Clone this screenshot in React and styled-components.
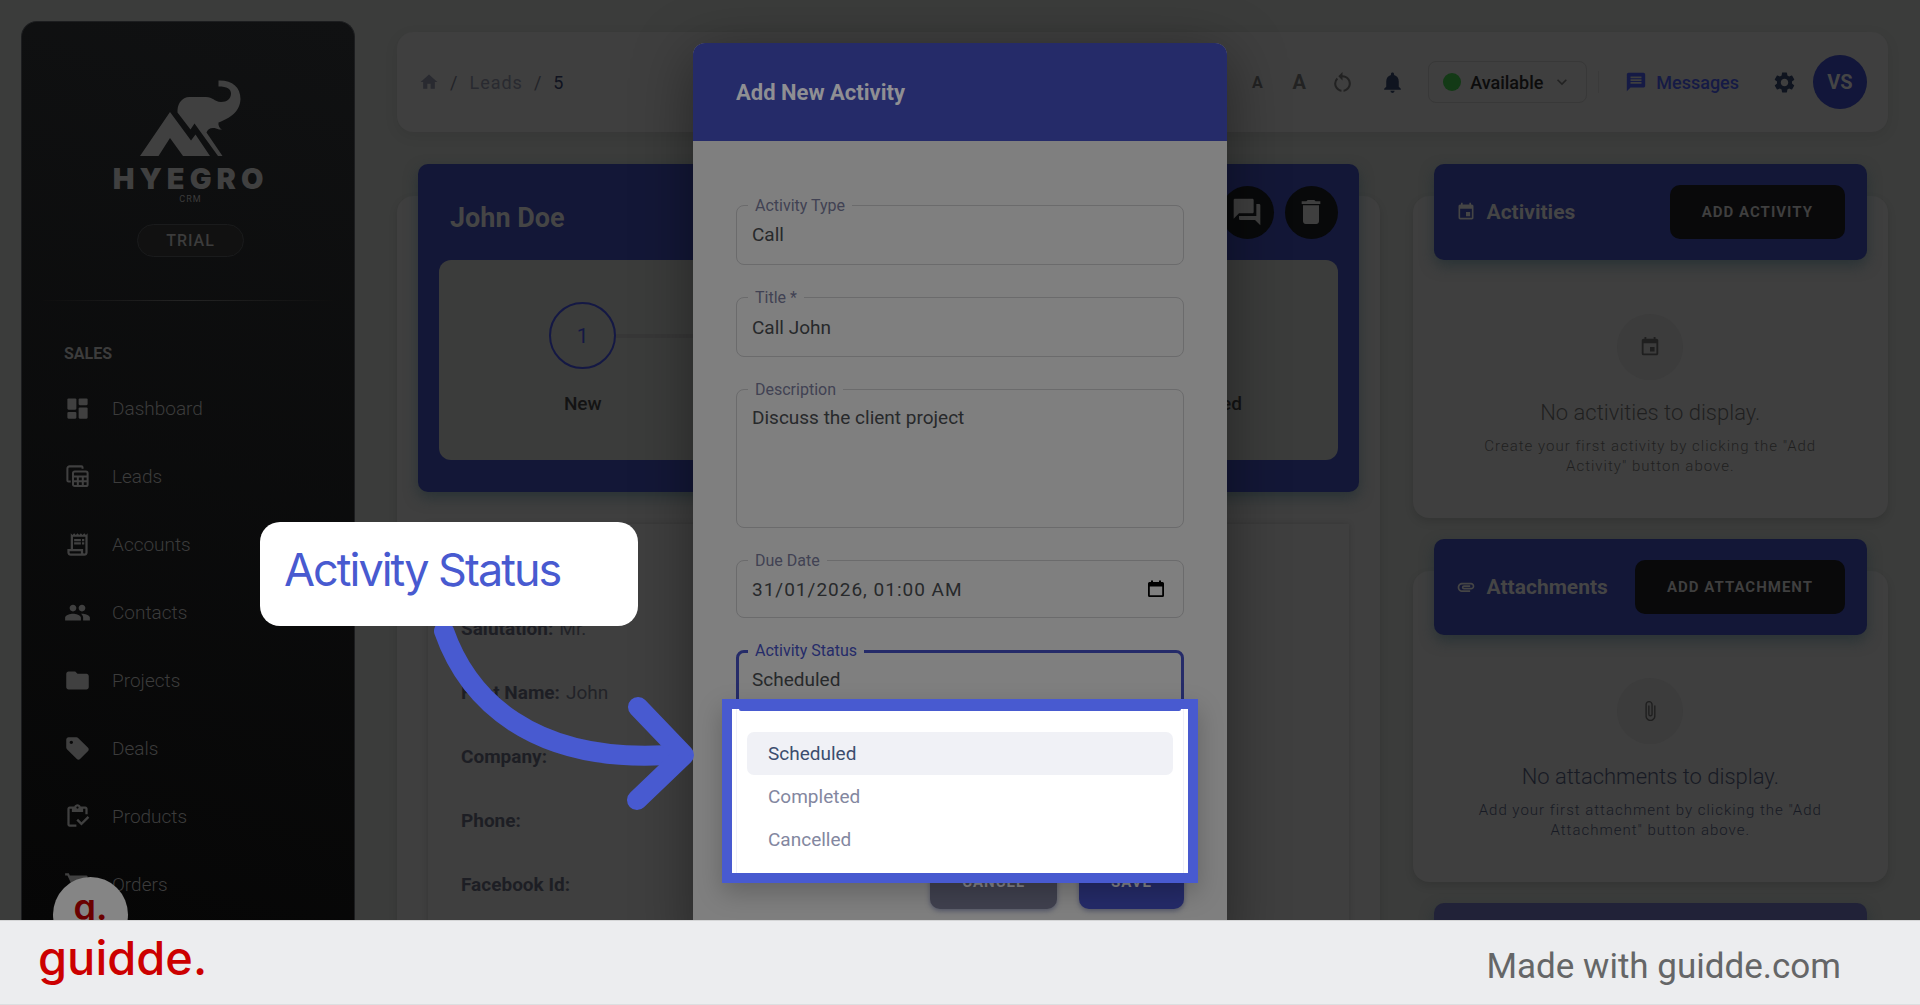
import styled, { createGlobalStyle } from "styled-components";
import {
  MdAttachFile,
  MdAttachment,
  MdDelete,
  MdEvent,
  MdFolder,
  MdHome,
  MdKeyboardArrowDown,
  MdMessage,
  MdNotifications,
  MdOutlineInventory,
  MdOutlineReceiptLong,
  MdPeople,
  MdQuestionAnswer,
  MdRestartAlt,
  MdSell,
  MdSettings,
  MdShoppingCart,
} from "react-icons/md";

const GlobalStyle = createGlobalStyle`
  * {
    box-sizing: border-box;
  }

  body {
    margin: 0;
    font-family: Roboto, "Liberation Sans", sans-serif;
    background: #3b3c3b;
  }

  button, input, select, textarea {
    font-family: inherit;
  }

  button {
    border: none;
    padding: 0;
    cursor: pointer;
  }

  a {
    color: inherit;
    text-decoration: none;
  }
`;

const Page = styled.div`
  height: 100vh;
  display: flex;
  flex-direction: column;
`;

const Stage = styled.div`
  flex: 1;
  min-height: 0;
  display: flex;
  position: relative;
  overflow: hidden;
`;

/* Sidebar */

const Sidebar = styled.aside`
  flex: none;
  width: 334px;
  margin: 21px 0 0 21px;
  padding-top: 58px;
  border-radius: 16px 16px 0 0;
  border: 1px solid #1c1d1f;
  border-bottom: none;
  background: linear-gradient(195deg, #101112, #060606);
  color: #3c3c3c;
`;

const Brand = styled.div`
  display: flex;
  flex-direction: column;
  align-items: center;
  padding-left: 5px;
`;

const BrandMark = styled.svg`
  width: 102px;
  height: 77px;
  fill: #404040;
`;

const BrandName = styled.div`
  margin-top: 8px;
  font-family: Inter, sans-serif;
  font-weight: 900;
  font-size: 29px;
  line-height: 28px;
  letter-spacing: 5px;
  color: #404040;
`;

const BrandSub = styled.div`
  font-size: 9px;
  line-height: 12px;
  letter-spacing: 1px;
`;

const Plan = styled.div`
  margin-top: 19px;
  width: 107px;
  border: 1px solid #1a1b1c;
  border-radius: 17px;
  background: #111111;
  text-align: center;
  font-size: 16px;
  font-weight: 500;
  line-height: 31px;
  letter-spacing: 1px;
`;

const Divider = styled.hr`
  width: 290px;
  height: 1px;
  margin: 43px auto 0;
  border: none;
  background: linear-gradient(to right, #0e0e0e, #242424, #0e0e0e);
`;

const SectionTitle = styled.h6`
  margin: 40px 0 0 42px;
  font-size: 16px;
  line-height: 26px;
  font-weight: 700;
`;

const Menu = styled.nav`
  margin-top: 7px;
`;

const MenuLink = styled.a`
  display: flex;
  align-items: center;
  gap: 21px;
  height: 68px;
  padding-left: 42px;
  font-size: 19px;
  font-weight: 300;

  svg {
    width: 27px;
    height: 27px;
    color: #404040;
  }
`;

const Launcher = styled.button`
  position: absolute;
  left: 53px;
  top: 877px;
  width: 75px;
  height: 75px;
  padding-bottom: 16px;
  border-radius: 50%;
  background: #858585;
  color: #6a0000;
  font-family: Inter, sans-serif;
  font-weight: 600;
  font-size: 36px;
  line-height: 36px;
`;

/* Page content */

const Main = styled.main`
  flex: 1;
  min-width: 0;
  padding: 32px 32px 0 42px;
`;

const TopBar = styled.header`
  height: 100px;
  padding: 0 21px 0 22px;
  border-radius: 16px;
  background: #3f3f3f;
  box-shadow: 0 4px 14px rgba(0, 0, 0, 0.08);
  display: flex;
  align-items: center;
  justify-content: space-between;
`;

const Breadcrumbs = styled.nav`
  display: flex;
  align-items: center;
  gap: 11px;
  font-size: 18px;
  letter-spacing: 1px;
  color: #222328;

  svg {
    width: 20px;
    height: 20px;
  }
`;

const Crumb = styled.a`
  display: flex;
  color: ${(props) => (props.$current ? "#10131f" : "#292a30")};
`;

const Tools = styled.div`
  display: flex;
  align-items: center;
`;

const ToolButton = styled.button`
  width: ${(props) => props.$width || 46}px;
  height: 42px;
  background: none;
  color: ${(props) => (props.$dark ? "#0f141f" : "#222222")};
  font-size: ${(props) => props.$size || 16}px;
  font-weight: 700;
  display: flex;
  align-items: center;
  justify-content: center;

  svg {
    width: 25px;
    height: 25px;
  }
`;

const StatusButton = styled.button`
  width: 159px;
  height: 42px;
  margin: 0 11px 0 8px;
  padding: 0 14px;
  border: 1px solid #383838;
  border-radius: 8px;
  background: none;
  color: #0c0c0c;
  font-size: 18px;
  font-weight: 500;
  display: flex;
  align-items: center;
  gap: 9px;

  svg {
    width: 20px;
    height: 20px;
    color: #222222;
    margin-left: auto;
  }
`;

const StatusDot = styled.span`
  width: 18px;
  height: 18px;
  border-radius: 50%;
  background: #133a16;
`;

const MessagesLink = styled.a`
  display: flex;
  align-items: center;
  gap: 9px;
  margin-right: 23px;
  padding-left: 26px;
  border-left: 1px solid #3a3a3a;
  color: #151a45;
  font-size: 18px;
  font-weight: 500;

  svg {
    width: 22px;
    height: 22px;
  }
`;

const Avatar = styled.button`
  width: 54px;
  height: 54px;
  margin-left: 7px;
  border-radius: 50%;
  background: #12163a;
  color: #454545;
  font-size: 20px;
  font-weight: 700;
`;

const Columns = styled.div`
  display: grid;
  grid-template-columns: 31fr 15fr;
  gap: 33px;
  align-items: start;
  margin-top: 64px;
`;

const SideColumn = styled.div`
  display: grid;
  gap: 53px;
`;

const Card = styled.section`
  padding: 0 21px;
  border-radius: 16px;
  background: #3f3f3f;
  box-shadow: 0 4px 8px rgba(0, 0, 0, 0.12);
`;

const LeadHeader = styled.div`
  position: relative;
  margin-top: -32px;
  height: 328px;
  padding: 21px;
  border-radius: 10px;
  background: #131737;
  box-shadow: 0 6px 14px rgba(28, 44, 48, 0.6);
`;

const LeadTop = styled.div`
  display: flex;
  align-items: center;
  justify-content: space-between;
`;

const LeadName = styled.h4`
  margin: 0 0 0 11px;
  padding-top: 12px;
  font-size: 27px;
  line-height: 42px;
  color: #454545;
`;

const LeadActions = styled.div`
  display: flex;
  gap: 11px;
`;

const RoundButton = styled.button`
  width: 53px;
  height: 53px;
  border-radius: 50%;
  background: #08090a;
  color: #3f3f3f;
  display: flex;
  align-items: center;
  justify-content: center;

  svg {
    width: 32px;
    height: 32px;
  }
`;

const Stepper = styled.ol`
  list-style: none;
  margin: 21px 0 0;
  padding: 42px 0 0;
  height: 200px;
  border-radius: 12px;
  background: #3b3c3b;
  display: flex;
  justify-content: space-between;
`;

const Step = styled.li`
  flex: 0 0 32%;
  display: flex;
  flex-direction: column;
  align-items: center;
  font-size: 19px;
  font-weight: 500;
  color: #131313;
`;

const StepTrack = styled.div`
  width: 100%;
  margin-bottom: 23px;
  display: flex;
  align-items: center;

  &::before,
  &::after {
    content: "";
    flex: 1;
    height: 4px;
    background: #373737;
  }

  ${Step}:first-child &::before,
  ${Step}:last-child &::after {
    background: none;
  }
`;

const StepCircle = styled.div`
  width: 67px;
  height: 67px;
  border: 2px solid #141844;
  border-radius: 50%;
  color: #141844;
  font-size: 21px;
  font-weight: 400;
  display: flex;
  align-items: center;
  justify-content: center;
`;

const Details = styled.dl`
  margin: 32px 10px 0;
  padding: 72px 33px 80px;
  background: #3f3f3f;
  box-shadow: 0 0 6px rgba(0, 0, 0, 0.16);
`;

const Detail = styled.div`
  display: flex;
  gap: 6px;
  height: 64px;
  align-items: center;
  font-size: 19px;
  color: #222328;

  dt {
    font-weight: 700;
    color: #1d1e24;
  }

  dd {
    margin: 0;
  }
`;

const CardHeader = styled.div`
  position: relative;
  margin-top: -32px;
  height: 96px;
  padding: 0 22px;
  border-radius: 10px;
  background: ${(props) => (props.$pale ? "#212238" : "#131737")};
  box-shadow: 0 6px 14px rgba(28, 44, 48, 0.6);
  color: #454545;
  display: flex;
  align-items: center;
  gap: 11px;

  svg {
    width: 20px;
    height: 20px;
  }
`;

const CardTitle = styled.h5`
  margin: 0;
  flex: 1;
  font-size: 21px;
  font-weight: 700;
`;

const AddButton = styled.button`
  height: 54px;
  padding: 0 32px;
  border-radius: 10px;
  background: #09090a;
  color: #3f3f3f;
  font-size: 15px;
  font-weight: 700;
  letter-spacing: 1px;
  white-space: nowrap;
`;

const Empty = styled.div`
  display: flex;
  flex-direction: column;
  align-items: center;
  padding: ${(props) => (props.$cool ? 43 : 54)}px 32px 42px;
  text-align: center;
  color: ${(props) => (props.$cool ? "#171a24" : "#1f1f1f")};
`;

const EmptyIcon = styled.div`
  width: 66px;
  height: 66px;
  border-radius: 50%;
  background: #3c3c3c;
  color: #1f1f1f;
  display: flex;
  align-items: center;
  justify-content: center;

  svg {
    width: 22px;
    height: 22px;
  }
`;

const EmptyTitle = styled.p`
  margin: 18px 0 8px;
  font-size: 22px;
  line-height: 30px;
  font-weight: 300;
`;

const EmptyText = styled.p`
  margin: 0;
  font-size: 15px;
  line-height: 20px;
  font-weight: 300;
  letter-spacing: 1px;
`;

/* Dialog */

const Overlay = styled.div`
  position: absolute;
  inset: 0;
  padding-top: 43px;
  display: flex;
  justify-content: center;
  align-items: flex-start;
`;

const Dialog = styled.form`
  width: 534px;
  border-radius: 12px;
  background: #7f7f7f;
  box-shadow: 0 12px 60px rgba(0, 0, 0, 0.4);
`;

const DialogHeader = styled.div`
  height: 98px;
  padding: 0 43px;
  border-radius: 12px 12px 0 0;
  background: #252b69;
  display: flex;
  align-items: center;
`;

const DialogTitle = styled.h2`
  margin: 0;
  font-size: 22px;
  font-weight: 700;
  color: #8f8f93;
`;

const DialogBody = styled.div`
  padding: 64px 43px 43px;
  display: grid;
  gap: 32px;
`;

const Field = styled.div`
  position: relative;
  height: ${(props) => props.$height || 60}px;
  border: ${(props) => (props.$focused ? "3px solid #252b69" : "1px solid #6b6b6c")};
  border-radius: 8px;

  & > label {
    position: absolute;
    top: ${(props) => (props.$focused ? -12 : -10)}px;
    left: ${(props) => (props.$focused ? 9 : 11)}px;
    padding: 0 7px;
    background: #7f7f7f;
    color: ${(props) => (props.$focused ? "#252b69" : "#414253")};
    font-size: 16px;
    line-height: 20px;
  }

  & > input,
  & > select,
  & > textarea {
    appearance: none;
    display: block;
    width: 100%;
    height: 100%;
    padding: 0 ${(props) => (props.$focused ? 13 : 15)}px;
    border: none;
    outline: none;
    resize: none;
    background: none;
    color: #27292b;
    font-size: 19px;
    line-height: 22px;
  }

  & > textarea {
    padding-top: 17px;
  }
`;

const DateInput = styled.input`
  letter-spacing: 1px;
`;

const PickerButton = styled.button`
  position: absolute;
  right: 18px;
  top: 18px;
  width: 18px;
  height: 20px;
  background: none;
  color: #000000;
`;

const Dropdown = styled.div`
  position: absolute;
  z-index: 1;
  top: 46px;
  left: -17px;
  right: -17px;
  border: 10px solid #485ad0;
  background: #ffffff;
  box-shadow: 0 10px 24px rgba(0, 0, 0, 0.22);
`;

const Options = styled.ul`
  list-style: none;
  margin: 0 4px;
  padding: 0 10px 12px;
  border: solid #eff0f8;
  border-width: 0 1px;
  background: #ffffff;

  &::before {
    content: "";
    display: block;
    height: 2px;
    margin: 0 -8px 21px;
    border-radius: 0 0 4px 4px;
    background: #485ad0;
  }
`;

const Option = styled.li`
  height: 43px;
  padding: 0 21px;
  border-radius: 7px;
  background: ${(props) => (props.$selected ? "#f0f1f6" : "transparent")};
  color: ${(props) => (props.$selected ? "#3c4d6e" : "#8387a0")};
  font-size: 19px;
  line-height: 43px;
`;

const Actions = styled.div`
  display: flex;
  justify-content: flex-end;
  gap: 22px;
  margin-top: 113px;
`;

const ActionButton = styled.button`
  height: 54px;
  padding: 0 32px;
  border-radius: 10px;
  background: ${(props) => (props.$primary ? "#252b69" : "#40414f")};
  color: #85858a;
  box-shadow: 0 2px 5px rgba(37, 43, 80, 0.5);
  font-size: 15px;
  font-weight: 700;
  letter-spacing: 1px;
`;

/* Walkthrough layer */

const Callout = styled.div`
  position: absolute;
  left: 260px;
  top: 522px;
  width: 378px;
  height: 104px;
  padding: 0 24px;
  border-radius: 20px;
  background: #ffffff;
  color: #485ad0;
  font-family: Inter, "Liberation Sans", sans-serif;
  font-size: 45px;
  line-height: 96px;
  font-weight: 400;
  letter-spacing: -2px;
  white-space: nowrap;
`;

const Arrow = styled.svg`
  position: absolute;
  left: 430px;
  top: 610px;
  width: 270px;
  height: 210px;
  fill: none;
  stroke: #485ad0;
  stroke-width: 20;
  stroke-linecap: round;
  stroke-linejoin: round;
`;

const Footer = styled.footer`
  flex: none;
  height: 85px;
  padding: 0 79px 0 38px;
  background: #ecedef;
  border-top: 1px solid #d5d6d7;
  border-bottom: 1px solid #dcdee0;
  display: flex;
  align-items: center;
  justify-content: space-between;
`;

const Wordmark = styled.a`
  padding-bottom: 10px;
  font-family: Inter, sans-serif;
  font-size: 47px;
  line-height: 60px;
  font-weight: 500;
  color: #cc0000;
`;

const MadeWith = styled.div`
  padding-top: 8px;
  font-size: 35px;
  line-height: 40px;
  color: #656667;
`;

const DashboardIcon = () => (
  <svg viewBox="0 0 24 24" fill="currentColor">
    <rect x="3" y="3" width="8" height="10" rx="1" />
    <rect x="3" y="15" width="8" height="6" rx="1" />
    <rect x="13" y="3" width="8" height="6" rx="1" />
    <rect x="13" y="11" width="8" height="10" rx="1" />
  </svg>
);

const LeadsIcon = () => (
  <svg viewBox="0 0 24 24" fill="none" stroke="currentColor" strokeWidth="1.8">
    <path d="M16.500 5V4a1 1 0 0 0-1-1H5a2 2 0 0 0-2 2v10.500a1 1 0 0 0 1 1h2" />
    <rect x="8" y="7.500" width="13" height="13" rx="1.500" />
    <path d="M8 12h13M8 16.300h13M12.300 12v9M16.700 12v9" />
  </svg>
);

const CalendarIcon = () => (
  <svg viewBox="0 0 18 20" width="18" height="20" fill="currentColor">
    <path d="M2.500 3H4V1.500h2V3h6V1.500h2V3h1.500A1.500 1.500 0 0 1 17 4.500v12a1.500 1.500 0 0 1-1.500 1.500h-13A1.500 1.500 0 0 1 1 16.500v-12A1.500 1.500 0 0 1 2.500 3zm.300 4.500v8.700h12.400V7.500z" />
  </svg>
);

const menu = [
  { label: "Dashboard", icon: <DashboardIcon /> },
  { label: "Leads", icon: <LeadsIcon /> },
  { label: "Accounts", icon: <MdOutlineReceiptLong /> },
  { label: "Contacts", icon: <MdPeople /> },
  { label: "Projects", icon: <MdFolder /> },
  { label: "Deals", icon: <MdSell /> },
  { label: "Products", icon: <MdOutlineInventory /> },
  { label: "Orders", icon: <MdShoppingCart /> },
];

const details = [
  ["Salutation:", "Mr."],
  ["First Name:", "John"],
  ["Company:", ""],
  ["Phone:", ""],
  ["Facebook Id:", ""],
];

const SideNav = () => (
  <Sidebar>
    <Brand>
      <BrandMark viewBox="0 0 102 77">
        <path d="M0 76 30 32 51 60.500 55.500 54.500 70 76H43L30 58 18.500 76z" />
        <path d="M37.500 30C38 22 43 17.500 49 17H66C73 17 74 21.500 81 22 87 22 91 18.500 91 13.500 91 9 87 6.500 78.500 6.500V.500C92 0 100.500 7 100.500 19 100 32 90 38 78.500 42.500 78 45.500 79.500 48.500 82 49.500 79 50 77 48.500 74.500 48 70 47.500 67.500 49.500 66.500 52.500L82.500 76H78L54.500 43.500 50.500 49.500 37.500 32.500z" />
      </BrandMark>
      <BrandName>HYEGRO</BrandName>
      <BrandSub>CRM</BrandSub>
      <Plan>TRIAL</Plan>
    </Brand>
    <Divider />
    <SectionTitle>SALES</SectionTitle>
    <Menu>
      {menu.map(({ label, icon }) => (
        <MenuLink key={label} href="#">
          {icon}
          {label}
        </MenuLink>
      ))}
    </Menu>
  </Sidebar>
);

const SideCard = ({ title, icon, button, emptyIcon, emptyTitle, emptyText, cool }) => (
  <Card>
    <CardHeader>
      {icon}
      <CardTitle>{title}</CardTitle>
      <AddButton type="button">{button}</AddButton>
    </CardHeader>
    <Empty $cool={cool}>
      <EmptyIcon>{emptyIcon}</EmptyIcon>
      <EmptyTitle>{emptyTitle}</EmptyTitle>
      <EmptyText>{emptyText}</EmptyText>
    </Empty>
  </Card>
);

const ActivityDialog = () => (
  <Overlay>
    <Dialog role="dialog" aria-labelledby="dialog-title">
      <DialogHeader>
        <DialogTitle id="dialog-title">Add New Activity</DialogTitle>
      </DialogHeader>
      <DialogBody>
        <Field>
          <label htmlFor="type">Activity Type</label>
          <select id="type" defaultValue="Call">
            <option>Call</option>
          </select>
        </Field>
        <Field>
          <label htmlFor="title">Title *</label>
          <input id="title" defaultValue="Call John" />
        </Field>
        <Field $height={139}>
          <label htmlFor="description">Description</label>
          <textarea id="description" defaultValue="Discuss the client project" />
        </Field>
        <Field $height={58}>
          <label htmlFor="due">Due Date</label>
          <DateInput id="due" defaultValue="31/01/2026, 01:00 AM" />
          <PickerButton type="button" aria-label="Open calendar">
            <CalendarIcon />
          </PickerButton>
        </Field>
        <Field $focused>
          <label htmlFor="status">Activity Status</label>
          <select id="status" defaultValue="Scheduled">
            <option>Scheduled</option>
            <option>Completed</option>
            <option>Cancelled</option>
          </select>
          <Dropdown>
            <Options role="listbox">
              <Option role="option" aria-selected="true" $selected>
                Scheduled
              </Option>
              <Option role="option">Completed</Option>
              <Option role="option">Cancelled</Option>
            </Options>
          </Dropdown>
        </Field>
        <Actions>
          <ActionButton type="button">CANCEL</ActionButton>
          <ActionButton type="button" $primary>
            SAVE
          </ActionButton>
        </Actions>
      </DialogBody>
    </Dialog>
  </Overlay>
);

const App = () => {
  return (
    <Page>
      <GlobalStyle />
      <Stage>
        <SideNav />
        <Main>
          <TopBar>
            <Breadcrumbs>
              <Crumb href="#" aria-label="Home">
                <MdHome />
              </Crumb>
              <span>/</span>
              <Crumb href="#">Leads</Crumb>
              <span>/</span>
              <Crumb href="#" $current>
                5
              </Crumb>
            </Breadcrumbs>
            <Tools>
              <ToolButton $width={42}>A</ToolButton>
              <ToolButton $width={42} $size={20}>
                A
              </ToolButton>
              <ToolButton $width={44} aria-label="Reset">
                <MdRestartAlt />
              </ToolButton>
              <ToolButton $width={56} $dark aria-label="Notifications">
                <MdNotifications />
              </ToolButton>
              <StatusButton>
                <StatusDot />
                Available
                <MdKeyboardArrowDown />
              </StatusButton>
              <MessagesLink href="#">
                <MdMessage />
                Messages
              </MessagesLink>
              <ToolButton $width={44} $dark aria-label="Settings">
                <MdSettings />
              </ToolButton>
              <Avatar>VS</Avatar>
            </Tools>
          </TopBar>
          <Columns>
            <Card>
              <LeadHeader>
                <LeadTop>
                  <LeadName>John Doe</LeadName>
                  <LeadActions>
                    <RoundButton aria-label="Conversation">
                      <MdQuestionAnswer />
                    </RoundButton>
                    <RoundButton aria-label="Delete">
                      <MdDelete />
                    </RoundButton>
                  </LeadActions>
                </LeadTop>
                <Stepper>
                  {["New", "Qualified", "Unqualified"].map((step, index) => (
                    <Step key={step}>
                      <StepTrack>
                        <StepCircle>{index + 1}</StepCircle>
                      </StepTrack>
                      {step}
                    </Step>
                  ))}
                </Stepper>
              </LeadHeader>
              <Details>
                {details.map(([name, value]) => (
                  <Detail key={name}>
                    <dt>{name}</dt>
                    <dd>{value}</dd>
                  </Detail>
                ))}
              </Details>
            </Card>
            <SideColumn>
              <SideCard
                title="Activities"
                icon={<MdEvent />}
                button="ADD ACTIVITY"
                emptyIcon={<MdEvent />}
                emptyTitle="No activities to display."
                emptyText={'Create your first activity by clicking the "Add Activity" button above.'}
              />
              <SideCard
                title="Attachments"
                icon={<MdAttachment />}
                button="ADD ATTACHMENT"
                emptyIcon={<MdAttachFile />}
                emptyTitle="No attachments to display."
                emptyText={'Add your first attachment by clicking the "Add Attachment" button above.'}
                cool
              />
              <Card>
                <CardHeader $pale />
              </Card>
            </SideColumn>
          </Columns>
        </Main>
        <Launcher aria-label="Guide">g.</Launcher>
        <ActivityDialog />
        <Arrow viewBox="0 0 270 210">
          <path d="M14 21C36 84 98 158 252 144" />
          <path d="M208 97 254 145 207 190" />
        </Arrow>
        <Callout>Activity Status</Callout>
      </Stage>
      <Footer>
        <Wordmark href="#">guidde.</Wordmark>
        <MadeWith>Made with guidde.com</MadeWith>
      </Footer>
    </Page>
  );
};

export default App;
